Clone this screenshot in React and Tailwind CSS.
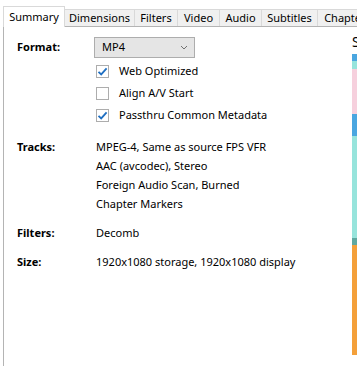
import React from 'react';

const tabs = [
  ['Summary', 'w-[62px]'],
  ['Dimensions', 'w-[70px]'],
  ['Filters', 'w-[43px]'],
  ['Video', 'w-[42px]'],
  ['Audio', 'w-[42px]'],
  ['Subtitles', 'w-[56px]'],
  ['Chapters', 'w-[60px]'],
];

function Check({ on }) {
  return (
    <span className="w-[13px] h-[13px] border border-[#adadad] bg-white flex items-center justify-center shrink-0">
      {on && (
        <svg width="11" height="11" viewBox="0 0 11 11">
          <path d="M1.5 5.8 L4.2 8.4 L9.6 2.4" fill="none" stroke="#1f6fc2" strokeWidth="1.8" />
        </svg>
      )}
    </span>
  );
}

function Row({ label, children, className = '' }) {
  return (
    <div className={`flex ${className}`}>
      <div className="w-[79px] shrink-0 font-bold leading-[19px]">{label}</div>
      <div className="flex flex-col">{children}</div>
    </div>
  );
}

export default function App() {
  return (
    <div
      className="w-[357px] h-[366px] overflow-hidden bg-white text-black text-[11px] flex flex-col"
      style={{ fontFamily: '"Noto Sans", "Segoe UI", sans-serif' }}
    >
      {/* tab strip */}
      <div className="flex items-end h-[26px] pl-[3px] shrink-0">
        {tabs.map(([t, w], i) =>
          i === 0 ? (
            <div key={t} className={`${w} h-[21px] bg-white border border-b-0 border-[#d9d9d9] flex items-center justify-center -mb-px relative z-10 shrink-0`}>
              {t}
            </div>
          ) : (
            <div key={t} className={`${w} h-[17px] bg-[#f0f0f0] border border-l-0 border-b-0 border-[#d9d9d9] flex items-center justify-center whitespace-nowrap shrink-0`}>
              {t}
            </div>
          )
        )}
      </div>

      {/* panel */}
      <div className="flex-1 ml-[3px] border-l border-t border-[#b4b4b4] flex min-h-0">
        <div className="w-[348px] shrink-0 pl-[13px] pt-[10px]">
          <div className="flex items-center">
            <div className="w-[77px] shrink-0 font-bold">Format:</div>
            <div className="w-[101px] h-[21px] bg-[#e5e5e5] border border-[#adadad] flex items-center justify-between pl-[7px] pr-[6px]">
              <span>MP4</span>
              <svg width="8" height="5" viewBox="0 0 8 5">
                <path d="M1 1 L4 4 L7 1" fill="none" stroke="#707070" strokeWidth="1" />
              </svg>
            </div>
          </div>
          <div className="ml-[79px] mt-[2px] flex flex-col">
            {[
              ['Web Optimized', true],
              ['Align A/V Start', false],
              ['Passthru Common Metadata', true],
            ].map(([l, on]) => (
              <label key={l} className="h-[22px] flex items-center gap-[10px]">
                <Check on={on} />
                <span>{l}</span>
              </label>
            ))}
          </div>

          <Row label="Tracks:" className="mt-[11px]">
            <span className="leading-[19px]">MPEG-4, Same as source FPS VFR</span>
            <span className="leading-[19px]">AAC (avcodec), Stereo</span>
            <span className="leading-[19px]">Foreign Audio Scan, Burned</span>
            <span className="leading-[19px]">Chapter Markers</span>
          </Row>
          <Row label="Filters:" className="mt-[10px]">
            <span className="leading-[19px]">Decomb</span>
          </Row>
          <Row label="Size:" className="mt-[10px]">
            <span className="leading-[19px]">1920x1080 storage, 1920x1080 display</span>
          </Row>
        </div>

        {/* source preview (cut off at the window edge) */}
        <div className="flex-1 min-w-0 pt-[6px] whitespace-nowrap">
          <div className="text-[14px] leading-[18px]">Source Preview</div>
          <svg width="6" height="301" viewBox="0 0 6 301" className="mt-[3px] block">
            <rect x="0" y="0" width="6" height="8" fill="#4aa6e0" />
            <rect x="0" y="7" width="6" height="10" fill="#97e4dc" />
            <rect x="0" y="15" width="6" height="45" fill="#f6d0dd" />
            <rect x="0" y="60" width="6" height="22" fill="#4aa6e0" />
            <rect x="0" y="82" width="6" height="102" fill="#97e4dc" />
            <rect x="0" y="184" width="6" height="7" fill="#5fa8a0" />
            <rect x="0" y="191" width="6" height="110" fill="#f4a03a" />
          </svg>
        </div>
      </div>
    </div>
  );
}
